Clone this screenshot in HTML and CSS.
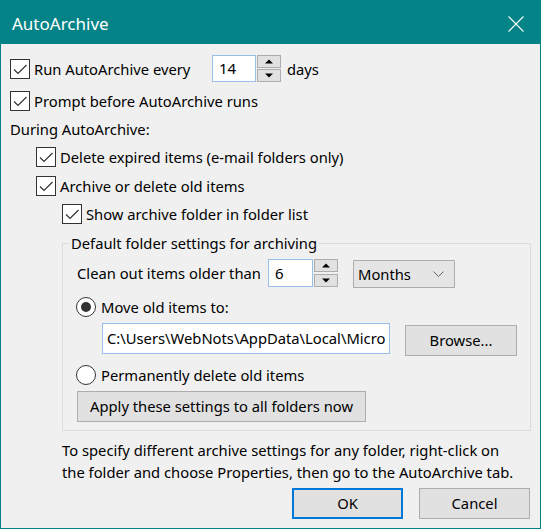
FILE: index.html
```html
<!DOCTYPE html>
<html>
<head>
<meta charset="utf-8">
<title>AutoArchive</title>
<link rel="stylesheet" href="styles.css">
</head>
<body>
<div class="window">
  <div class="titlebar">
    <span class="title">AutoArchive</span>
    <svg class="close" width="16" height="16" viewBox="0 0 16 16"><path d="M0.5 0.5 L15.5 15.5 M15.5 0.5 L0.5 15.5" stroke="#fff" stroke-width="1.1" fill="none"/></svg>
  </div>
  <div class="content">
    <div class="row r1">
      <label class="check w-run">
        <svg class="cb" width="20" height="20" viewBox="0 0 20 20"><rect x="0.5" y="0.5" width="19" height="19" fill="#fff" stroke="#333"/><path d="M4 10.5 L8 14.5 L16.5 6" stroke="#333" stroke-width="1.2" fill="none"/></svg>
        <span>Run AutoArchive every</span>
      </label>
      <div class="spinbox">
        <div class="spin-input s14">14</div>
        <div class="spin-btns">
          <div class="spin-btn"><svg width="22" height="11" viewBox="0 0 22 11"><polygon points="7,7.5 15,7.5 11,3.5" fill="#000"/></svg></div>
          <div class="spin-btn"><svg width="22" height="11" viewBox="0 0 22 11"><polygon points="7,3.5 15,3.5 11,7.5" fill="#000"/></svg></div>
        </div>
      </div>
      <span class="days">days</span>
    </div>
    <div class="row r2">
      <label class="check">
        <svg class="cb" width="20" height="20" viewBox="0 0 20 20"><rect x="0.5" y="0.5" width="19" height="19" fill="#fff" stroke="#333"/><path d="M4 10.5 L8 14.5 L16.5 6" stroke="#333" stroke-width="1.2" fill="none"/></svg>
        <span>Prompt before AutoArchive runs</span>
      </label>
    </div>
    <div class="row r3">During AutoArchive:</div>
    <div class="row r4 ind1">
      <label class="check">
        <svg class="cb" width="20" height="20" viewBox="0 0 20 20"><rect x="0.5" y="0.5" width="19" height="19" fill="#fff" stroke="#333"/><path d="M4 10.5 L8 14.5 L16.5 6" stroke="#333" stroke-width="1.2" fill="none"/></svg>
        <span>Delete expired items (e-mail folders only)</span>
      </label>
    </div>
    <div class="row r5 ind1">
      <label class="check">
        <svg class="cb" width="20" height="20" viewBox="0 0 20 20"><rect x="0.5" y="0.5" width="19" height="19" fill="#fff" stroke="#333"/><path d="M4 10.5 L8 14.5 L16.5 6" stroke="#333" stroke-width="1.2" fill="none"/></svg>
        <span>Archive or delete old items</span>
      </label>
    </div>
    <div class="row r6 ind2">
      <label class="check">
        <svg class="cb" width="20" height="20" viewBox="0 0 20 20"><rect x="0.5" y="0.5" width="19" height="19" fill="#fff" stroke="#333"/><path d="M4 10.5 L8 14.5 L16.5 6" stroke="#333" stroke-width="1.2" fill="none"/></svg>
        <span>Show archive folder in folder list</span>
      </label>
    </div>
    <fieldset class="group">
      <legend>Default folder settings for archiving</legend>
      <div class="row g1">
        <span class="w-clean">Clean out items older than</span>
        <div class="spinbox">
          <div class="spin-input s6">6</div>
          <div class="spin-btns">
            <div class="spin-btn"><svg width="22" height="11" viewBox="0 0 22 11"><polygon points="7,7.5 15,7.5 11,3.5" fill="#000"/></svg></div>
            <div class="spin-btn"><svg width="22" height="11" viewBox="0 0 22 11"><polygon points="7,3.5 15,3.5 11,7.5" fill="#000"/></svg></div>
          </div>
        </div>
        <div class="combo">
          <span>Months</span>
          <svg width="11" height="6" viewBox="0 0 11 6"><polyline points="0.5,0.5 5.5,5.5 10.5,0.5" stroke="#666" stroke-width="1" fill="none"/></svg>
        </div>
      </div>
      <div class="row g2">
        <label class="check">
          <svg class="cb" width="20" height="20" viewBox="0 0 20 20"><circle cx="10" cy="10" r="9.5" fill="#fff" stroke="#333"/><circle cx="10" cy="10" r="5" fill="#333"/></svg>
          <span class="rtext">Move old items to:</span>
        </label>
      </div>
      <div class="row g3">
        <div class="path">C:\Users\WebNots\AppData\Local\Micro</div>
        <div class="btn browse">Browse...</div>
      </div>
      <div class="row g4">
        <label class="check">
          <svg class="cb" width="20" height="20" viewBox="0 0 20 20"><circle cx="10" cy="10" r="9.5" fill="#fff" stroke="#333"/></svg>
          <span class="rtext">Permanently delete old items</span>
        </label>
      </div>
      <div class="row g5">
        <div class="btn apply">Apply these settings to all folders now</div>
      </div>
    </fieldset>
    <p class="note">To specify different archive settings for any folder, right-click on<br>the folder and choose Properties, then go to the AutoArchive tab.</p>
    <div class="actions">
      <div class="btn ok">OK</div>
      <div class="btn cancel">Cancel</div>
    </div>
  </div>
</div>
</body>
</html>
```

FILE: styles.css
```css
html, body {
  margin: 0;
  padding: 0;
  background: #f0f0f0;
}
body {
  font-family: "Noto Sans", "Open Sans", sans-serif;
  font-size: 14.75px;
  color: #000;
}
.window {
  width: 541px;
  height: 529px;
  box-sizing: border-box;
  border: 1px solid #038387;
  background: #f0f0f0;
  display: flex;
  flex-direction: column;
  overflow: hidden;
}
.titlebar {
  height: 43px;
  flex: none;
  background: #038387;
  color: #fff;
  display: flex;
  align-items: center;
  justify-content: space-between;
  padding: 0 16px 0 11px;
}
.title {
  font-size: 17px;
  line-height: 20px;
  position: relative;
  top: 1px;
}
.close {
  display: block;
  margin-top: 2px;
}
.content {
  padding: 0 0 0 9px;
  display: flex;
  flex-direction: column;
}
.row {
  display: flex;
  align-items: center;
  white-space: nowrap;
  line-height: 20px;
}
.check {
  display: flex;
  align-items: center;
}
.cb {
  display: block;
  flex: none;
  margin-right: 4px;
}
.rtext {
  margin-left: 1px;
}
.r1 { margin-top: 11px; height: 27px; }
.w-run { width: 202px; }
.spinbox {
  display: flex;
  height: 100%;
}
.spin-input {
  box-sizing: border-box;
  height: 27px;
  border: 1px solid #99bfe8;
  background: #fff;
  padding-left: 6px;
  line-height: 25px;
  font-size: 15px;
}
.s14 { width: 44px; }
.spin-btns {
  display: flex;
  flex-direction: column;
  justify-content: space-between;
  margin-left: 1px;
  width: 24px;
}
.spin-btn {
  box-sizing: border-box;
  height: 13px;
  background: #e1e1e1;
  border: 1px solid #adadad;
}
.spin-btn svg { display: block; }
.days { margin-left: 6px; }
.r2 { margin-top: 9px; height: 20px; }
.r3 { margin-top: 8px; height: 20px; }
.r4 { margin-top: 8px; height: 20px; }
.r5 { margin-top: 9px; height: 20px; }
.r6 { margin-top: 8px; height: 20px; }
.ind1 { padding-left: 26px; }
.ind2 { padding-left: 52px; }
.group {
  box-sizing: border-box;
  width: 469px;
  margin: 9px 0 0 52px;
  padding: 0 0 8px 0;
  border: 1px solid #dcdcdc;
  min-width: 0;
}
.group legend {
  margin-left: 6px;
  padding: 0 2px;
  line-height: 20px;
}
.g1 {
  margin-top: 6px;
  height: 29px;
  padding-left: 14px;
  align-items: flex-start;
}
.w-clean {
  width: 191px;
  line-height: 29px;
}
.g1 .spinbox { height: 28px; }
.s6 { width: 45px; height: 28px; line-height: 26px; }
.g1 .spin-btns { height: 28px; }
.g1 .spin-btn { height: 13px; }
.combo {
  box-sizing: border-box;
  margin: 1px 0 0 15px;
  width: 102px;
  height: 28px;
  background: #e5e5e5;
  border: 1px solid #adadad;
  display: flex;
  align-items: center;
  justify-content: space-between;
  padding: 0 10px 0 4px;
}
.combo svg { display: block; }
.g2 { margin-top: 9px; height: 20px; padding-left: 13px; }
.g3 { margin-top: 6px; height: 33px; padding-left: 39px; align-items: flex-start; }
.path {
  box-sizing: border-box;
  width: 288px;
  height: 31px;
  border: 1px solid #99bfe8;
  background: #fff;
  padding-left: 4px;
  line-height: 29px;
  overflow: hidden;
  white-space: nowrap;
}
.btn {
  box-sizing: border-box;
  background: #e1e1e1;
  border: 1px solid #adadad;
  text-align: center;
  height: 31px;
  line-height: 29px;
}
.browse {
  margin: 2px 0 0 15px;
  width: 112px;
}
.g4 { margin-top: 9px; height: 20px; padding-left: 13px; }
.g5 { margin-top: 6px; height: 31px; padding-left: 14px; }
.apply { width: 289px; }
.note {
  margin: 8px 0 0 52px;
  line-height: 22px;
  white-space: nowrap;
}
.actions {
  display: flex;
  justify-content: flex-end;
  margin-top: 5px;
  padding-right: 10px;
  gap: 16px;
}
.ok {
  width: 111px;
  border: 2px solid #0078d7;
  line-height: 27px;
}
.cancel { width: 111px; }
```
